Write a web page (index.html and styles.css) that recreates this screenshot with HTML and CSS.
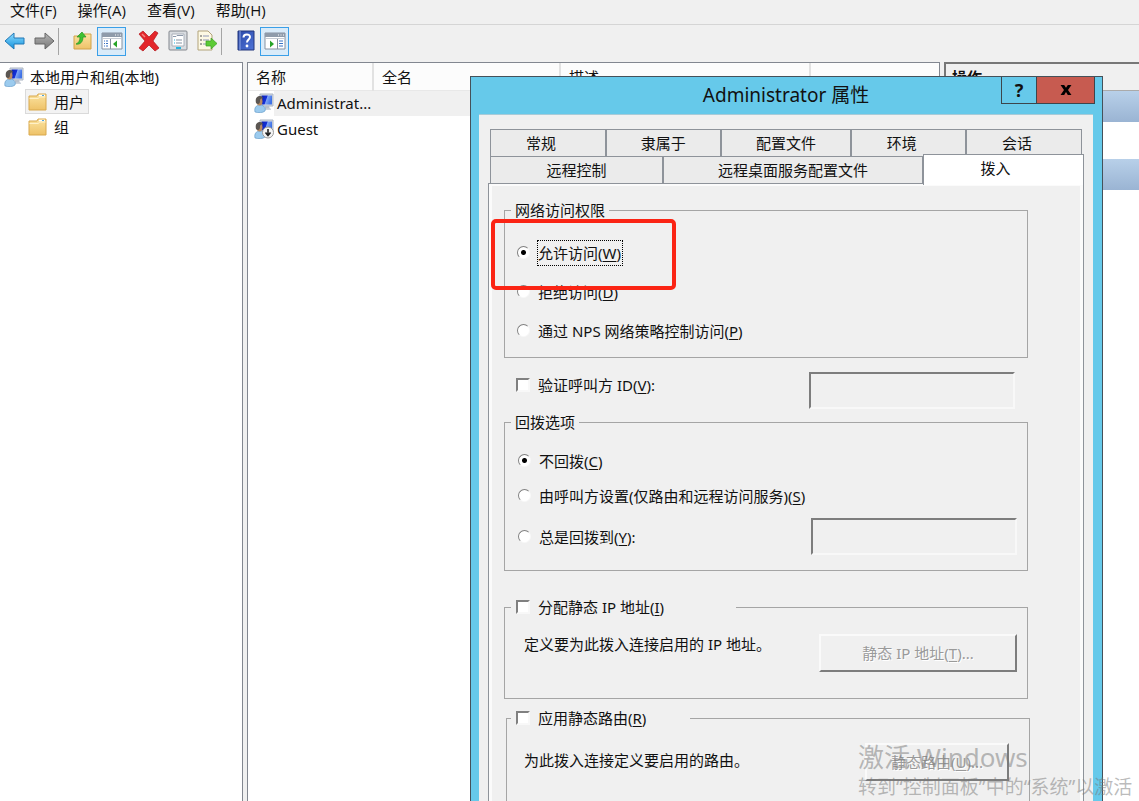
FILE: index.html
```html
<!DOCTYPE html>
<html lang="zh-CN">
<head>
<meta charset="utf-8">
<title>本地用户和组</title>
<link rel="stylesheet" href="styles.css">
</head>
<body>
<svg class="defs" width="0" height="0" aria-hidden="true">
  <defs>
    <linearGradient id="gBlue" x1="0" y1="0" x2="1" y2=".3"><stop offset="0" stop-color="#0a1fb0"/><stop offset=".5" stop-color="#1430d8"/><stop offset=".58" stop-color="#7fa4f6"/><stop offset="1" stop-color="#3f72e6"/></linearGradient>
    <linearGradient id="gFold" x1="0" y1="0" x2="0" y2="1"><stop offset="0" stop-color="#fbe3a0"/><stop offset="1" stop-color="#eec268"/></linearGradient>
    <linearGradient id="gArrow" x1="0" y1="0" x2="0" y2="1"><stop offset="0" stop-color="#8fdcff"/><stop offset="1" stop-color="#1292dc"/></linearGradient>
    <linearGradient id="gGray" x1="0" y1="0" x2="0" y2="1"><stop offset="0" stop-color="#b5b5b5"/><stop offset="1" stop-color="#777"/></linearGradient>
    <linearGradient id="gHelp" x1="0" y1="0" x2="1" y2="1"><stop offset="0" stop-color="#2a48a8"/><stop offset="1" stop-color="#4f74d8"/></linearGradient>
    <symbol id="user" viewBox="0 0 20 20">
      <path d="M6 1h13v12H6z" fill="#d5dbe4" stroke="#aab4c2"/>
      <path d="M7.500 2.500h10.500v9H7.500z" fill="url(#gBlue)"/>
      <path d="M11 13h4l1 3h-5z" fill="#b8c0cc"/><path d="M9 15.500h8v1.500H9z" fill="#ccd3dc"/>
      <path d="M1 19c-1-4 1-7 5-7s6 3 5 6c-2 2-7 2-10 1z" fill="#9ccbee" stroke="#5a93c4" stroke-width=".6"/>
      <ellipse cx="5.500" cy="8.500" rx="3" ry="4" fill="#b98a62"/>
      <path d="M2 10c-1-5 1-7 4-7 2 0 3 1 3 3-2-1-3 0-3 2 0 3-2 4-4 2z" fill="#5b5652"/>
    </symbol>
    <symbol id="folder" viewBox="0 0 20 18">
      <path d="M1 3h8l1-2h8v16H1z" fill="url(#gFold)" stroke="#d9a94f"/>
      <path d="M11 2.500h6" stroke="#fff" stroke-width="1.500"/><path d="M14 2.500h2" stroke="#4fa6e0"/>
      <path d="M1.500 5.500h9l1-1.500h6" fill="none" stroke="#fff1c8"/>
    </symbol>
    <symbol id="panel" viewBox="0 0 22 20">
      <path d="M1 2h20v16H1z" fill="#fff" stroke="#8691a0"/>
      <path d="M1 2h20v4H1z" fill="#8f9baa"/><path d="M14 4h1M16.500 4h1M19 4h1" stroke="#fff"/>
      <path d="M2 7.500h18" stroke="#c6ccd4"/>
    </symbol>
  </defs>
</svg>
<div class="app">
  <nav class="menubar">
    <button>文件(F)</button><button>操作(A)</button><button>查看(V)</button><button>帮助(H)</button>
  </nav>
  <div class="toolbar">
    <button class="tool" aria-label="后退"><svg width="22" height="20" viewBox="0 0 22 20"><path d="M1 10l9-8v5h10v6H10v5z" fill="url(#gArrow)" stroke="#2379b6"/></svg></button>
    <button class="tool" aria-label="前进"><svg width="22" height="20" viewBox="0 0 22 20"><path d="M21 10l-9-8v5H2v6h10v5z" fill="url(#gGray)" stroke="#666"/></svg></button>
    <span class="sep"></span>
    <button class="tool" aria-label="上移"><svg width="22" height="22" viewBox="0 0 22 22"><path d="M2 6h9l1-2h7v15H2z" fill="url(#gFold)" stroke="#d2a24b"/><path d="M4 14c3-1 4-4 4-7H5l5-5 4 5h-3c0 5-3 8-7 7z" fill="#3fc132" stroke="#259322" stroke-width=".7"/></svg></button>
    <button class="tool pressed" aria-label="显示/隐藏控制台树"><svg width="22" height="20" viewBox="0 0 22 20"><use href="#panel"/><path d="M9.500 8v10" stroke="#8691a0"/><path d="M3 10h4M3 12.500h4M3 15h4" stroke="#3973c4" stroke-dasharray="1 1 4"/><path d="M16 9.500v7l-4-3.500z" fill="#28a428"/></svg></button>
    <span class="space"></span>
    <button class="tool" aria-label="删除"><svg width="22" height="22" viewBox="0 0 22 22"><path d="M1 4l4-3 6 6 6-6 3 2-5 8 6 7-4 3-6-6-6 6-4-3 6-7z" fill="#e3262b" stroke="#b3161b" stroke-width=".7"/><path d="M4 4l3 3" stroke="#f48380" stroke-width="1.500"/></svg></button>
    <button class="tool" aria-label="属性"><svg width="20" height="22" viewBox="0 0 20 22"><rect x="1" y="1" width="18" height="19" rx="1" fill="#d9dce0" stroke="#83878e"/><path d="M4 4h12v12H4z" fill="#fff" stroke="#a9b0ba"/><path d="M5 6.500h3l1-1h6" stroke="#8b98aa" fill="none"/><path d="M6 10h1M6 13h1" stroke="#25b4dd"/><path d="M8 10h6M8 13h6" stroke="#8793a3"/><path d="M8 18h5" stroke="#25b4dd" stroke-width="2"/></svg></button>
    <button class="tool" aria-label="导出列表"><svg width="22" height="22" viewBox="0 0 22 22"><path d="M2 1h10l4 4v15H2z" fill="#fdf9e4" stroke="#b2a37b"/><path d="M4 6h2M4 10h2M4 14h2" stroke="#555"/><path d="M7 6h6M7 10h6M7 14h4" stroke="#8f97b8"/><path d="M10 11h5V8l6 5.500-6 5.500v-3h-5z" fill="#5ccb35" stroke="#3a9e23" stroke-width=".7"/></svg></button>
    <span class="sep"></span>
    <button class="tool" aria-label="帮助"><svg width="20" height="22" viewBox="0 0 20 22"><path d="M2 1h16v19H2z" fill="url(#gHelp)" stroke="#22367c"/><path d="M4 1v19" stroke="#8ea5e4"/><path d="M7.500 7.500c0-4 6.500-4 6.500-.5 0 2.500-3 2.500-3 5.500" fill="none" stroke="#fff" stroke-width="2"/><circle cx="11" cy="16" r="1.400" fill="#fff"/></svg></button>
    <button class="tool pressed" aria-label="显示/隐藏操作窗格"><svg width="22" height="20" viewBox="0 0 22 20"><use href="#panel"/><path d="M13.500 8v10" stroke="#8691a0"/><path d="M15 10h4M15 12.500h4M15 15h4" stroke="#3973c4"/><path d="M6 9.500v7l4-3.500z" fill="#28a428"/></svg></button>
  </div>
  <main class="panes">
    <section class="pane tree">
      <div class="node"><svg width="20" height="20"><use href="#user"/></svg><span>本地用户和组(本地)</span></div>
      <div class="node child selected"><svg width="20" height="18"><use href="#folder"/></svg><span>用户</span></div>
      <div class="node child"><svg width="20" height="18"><use href="#folder"/></svg><span>组</span></div>
    </section>
    <section class="pane list">
      <table class="users">
        <thead><tr><th class="c1">名称</th><th class="c2">全名</th><th class="c3">描述</th><th></th></tr></thead>
        <tbody>
          <tr class="current"><td><div class="cell"><svg width="20" height="20"><use href="#user"/></svg>Administrat...</div></td><td></td><td></td><td></td></tr>
          <tr><td><div class="cell"><svg width="20" height="20" viewBox="0 0 20 20"><use href="#user"/><circle cx="14" cy="13.500" r="5.500" fill="#f4f4f4" stroke="#999"/><path d="M14 10v6M11.500 13.500L14 16.500l2.500-3" fill="none" stroke="#222" stroke-width="1.600"/></svg>Guest</div></td><td></td><td></td><td></td></tr>
        </tbody>
      </table>
    </section>
    <aside class="pane actions">
      <h2>操作</h2>
      <div class="band"></div><div class="blank"></div><div class="band"></div>
    </aside>
  </main>
</div>

<div class="dialog" role="dialog" aria-labelledby="dlg-title">
  <header class="titlebar">
    <h1 id="dlg-title">Administrator 属性</h1>
    <div class="caption"><button class="help">?</button><button class="close" aria-label="关闭"><svg width="12" height="10" viewBox="0 0 12 11"><path d="M0 0h4l2 3 2-3h4L8.200 5.500 12 11H8L6 7.800 4 11H0l3.800-5.500z" fill="#000"/></svg></button></div>
  </header>
  <div class="client">
    <div class="tabs" role="tablist">
      <div class="tabrow upper"><button role="tab" class="lead">常规</button><button role="tab">隶属于</button><button role="tab">配置文件</button><button role="tab" class="lead">环境</button><button role="tab" class="lead">会话</button></div>
      <div class="tabrow lower"><button role="tab">远程控制</button><button role="tab">远程桌面服务配置文件</button><button role="tab" class="active" aria-selected="true">拨入</button></div>
    </div>
    <form class="page">
      <fieldset class="access">
        <legend>网络访问权限</legend>
        <label class="opt"><input type="radio" name="access" checked><span class="focus">允许访问(<u>W</u>)</span></label>
        <label class="opt"><input type="radio" name="access"><span>拒绝访问(<u>D</u>)</span></label>
        <label class="opt"><input type="radio" name="access"><span>通过 NPS 网络策略控制访问(<u>P</u>)</span></label>
        <div class="highlight"></div>
      </fieldset>
      <div class="verify">
        <label class="opt"><input type="checkbox"><span>验证呼叫方 ID(<u>V</u>):</span></label>
        <input type="text" class="field" aria-label="呼叫方 ID" disabled>
      </div>
      <fieldset class="callback">
        <legend>回拨选项</legend>
        <label class="opt"><input type="radio" name="cb" checked><span>不回拨(<u>C</u>)</span></label>
        <label class="opt"><input type="radio" name="cb"><span>由呼叫方设置(仅路由和远程访问服务)(<u>S</u>)</span></label>
        <div class="always">
          <label class="opt"><input type="radio" name="cb"><span>总是回拨到(<u>Y</u>):</span></label>
          <input type="text" class="field" aria-label="回拨号码" disabled>
        </div>
      </fieldset>
      <fieldset class="static ip">
        <legend><label class="opt"><input type="checkbox"><span>分配静态 IP 地址(<u>I</u>)</span></label></legend>
        <div class="line"><p>定义要为此拨入连接启用的 IP 地址。</p><button type="button" disabled>静态 IP 地址(<u>T</u>)...</button></div>
      </fieldset>
      <fieldset class="static route">
        <legend><label class="opt"><input type="checkbox"><span>应用静态路由(<u>R</u>)</span></label></legend>
        <div class="line"><p>为此拨入连接定义要启用的路由。</p><button type="button" disabled>静态路由(<u>U</u>)...</button></div>
      </fieldset>
    </form>
  </div>
</div>

<div class="watermark"><strong>激活 Windows</strong><span>转到“控制面板”中的“系统”以激活</span></div>
</body>
</html>
```

FILE: styles.css
```css
* { box-sizing: border-box; }
body {
  margin: 0;
  height: 100vh;
  overflow: hidden;
  position: relative;
  background: #f0f0f0;
  color: #111;
  font: 15px/20px "Noto Sans", "Noto Sans CJK SC", sans-serif;
}
button, input { font: inherit; color: inherit; margin: 0; }
button { background: none; border: 0; padding: 0; }
h1, h2, p { margin: 0; font-weight: 400; }
svg { display: block; flex: none; }
u { text-underline-offset: 2px; }
.defs { position: absolute; }

/* console window */
.app { height: 100%; display: flex; flex-direction: column; }
.menubar { display: flex; gap: 21px; padding: 0 10px 4px; border-bottom: 1px solid #d5d5d5; }
.menubar button { font-family: "Open Sans", "Noto Sans CJK SC", sans-serif; white-space: nowrap; }
.toolbar { display: flex; align-items: center; height: 32px; }
.tool { width: 29px; height: 29px; display: flex; align-items: center; justify-content: center; }
.tool.pressed { background: #d9ebf9; border: 1px solid #3a9fe8; }
.sep { width: 1px; height: 27px; background: #a5a5a5; margin: 0 9px 0 0; }
.space { width: 8px; }
.panes { flex: 1; display: grid; grid-template-columns: 243px 1fr 195px; column-gap: 4px; padding-top: 5px; min-height: 0; }
.pane { background: #fff; border: 1px solid #828790; border-bottom: 0; overflow: hidden; }
.tree { border-left: 0; padding: 1px 0 0 4px; }
.node { display: flex; align-items: center; gap: 6px; height: 25px; }
.child { width: 64px; margin-left: 21px; padding-left: 2px; border: 1px solid transparent; }
.child.selected { background: #f3f3f3; border-color: #dadada; }

.users { width: 100%; border-collapse: collapse; table-layout: fixed; }
.users th { height: 27px; padding: 2px 0 0 8px; font-weight: 400; text-align: left; background: #fcfcfc; border-right: 2px solid #e2e2e2; border-bottom: 1px solid #e8e8e8; }
.users th:last-child { border-right: 0; }
.c1 { width: 125px; }
.c2 { width: 187px; }
.c3 { width: 250px; }
.users td { height: 26px; padding: 0; }
.current td { background: #f0f0f0; }
.current td:first-child { background: linear-gradient(90deg, #fff 26px, #f0f0f0 26px); }
.cell { display: flex; align-items: center; gap: 3px; padding-left: 6px; white-space: nowrap; }

.actions { border: 2px solid #777; border-right: 0; border-bottom: 0; }
.actions h2 { height: 27px; padding: 3px 0 0 6px; font-size: 15px; font-weight: 700; background: #f0f0f0; border-bottom: 1px solid #aaa; }
.band { height: 31px; background: linear-gradient(#b8d0e9, #9ab4d3); }
.blank { height: 37px; }

/* properties dialog */
.dialog { position: absolute; left: 470px; top: 76px; bottom: 0; width: 633px; overflow: hidden; background: #66c9ea; border: 1px solid #45515a; border-bottom: 0; padding: 0 9px 0 8px; }
.titlebar { height: 37px; position: relative; }
.titlebar h1 { font-size: 19px; line-height: 36px; text-align: center; }
.caption { position: absolute; right: -2px; top: 0; display: flex; }
.caption button { height: 27px; border: 1px solid #3c454b; border-top: 0; display: flex; align-items: center; justify-content: center; }
.help { width: 36px; font-size: 18px; font-weight: 700; }
.caption .close { width: 58px; border-left: 0; background: #c75b50; }
.client { background: #f0f0f0; border-top: 1px solid #a8cbd8; padding: 14px 9px 0; }
.tabs { padding: 0 2px; }
.tabrow { display: grid; }
.tabrow button { background: #ebebeb; border-right: 2px solid #8e939a; padding-bottom: 1px; }
.upper { grid-template-columns: 116fr 115fr 131fr 115fr 114fr; border: 1px solid #8e939a; border-bottom: 0; }
.upper button { height: 26px; }
.upper .lead { padding-right: 14px; }
.upper button:last-child { border-right: 0; }
.lower { grid-template-columns: 173fr 260fr 158fr; border-left: 1px solid #8e939a; }
.lower button { height: 27px; border-top: 1px solid #8e939a; }
.lower button.active { position: relative; background: #fff; height: 31px; margin: -2px -2px -2px -1px; border: 1px solid #8e939a; border-bottom: 0; padding: 0 16px 4px 0; }
.page { border: 1px solid #8e939a; border-bottom: 0; box-shadow: inset 3px 2px 0 #fbfbfb, inset -3px 0 0 #fbfbfb; padding: 16px 55px 0 15px; }

fieldset { position: relative; min-width: 0; margin: 0; border: 1px solid #a5a5a5; padding: 0 10px 0 6px; }
legend { height: 20px; padding: 0 4px; }
.opt { display: flex; align-items: center; gap: 8px; white-space: nowrap; }
.opt input { appearance: none; width: 14px; height: 14px; flex: none; background: #fff; border: 2px solid; border-color: #808080 #f8f8f8 #f8f8f8 #808080; }
.opt input[type="radio"] { width: 13px; height: 13px; border-width: 1px; border-radius: 50%; }
.opt input[type="radio"]:checked { background: radial-gradient(circle, #000 0 2px, #fff 3px); }
.access { padding-top: 13px; padding-bottom: 7px; }
.access .opt { height: 39px; padding-left: 6px; }
.focus { outline: 1px dotted #000; padding: 2px 1px 2px 0; }
.highlight { position: absolute; left: -14px; top: -1px; width: 185px; height: 71px; border: 4px solid #fb2414; border-radius: 5px; }
.verify { display: flex; justify-content: space-between; margin-top: 14px; padding: 0 13px 0 12px; }
.verify .opt { height: 26px; }
.field { width: 206px; height: 37px; background: #f0f0f0; border: 2px solid; border-color: #7d7d7d #f8f8f8 #f8f8f8 #7d7d7d; }
.callback { margin-top: 3px; padding: 11px 10px 15px 6px; }
.callback .opt { height: 35px; padding-left: 7px; }
.always { display: flex; align-items: center; justify-content: space-between; margin-top: 5px; }
.static legend { padding: 0 0 0 5px; }
.static .line { display: flex; justify-content: space-between; align-items: flex-start; padding-left: 13px; }
.static button { height: 38px; color: #9a9a9a; text-shadow: 1px 1px 0 #fff; border: 2px solid; border-color: #fafafa #7d7d7d #7d7d7d #fafafa; }
.ip { margin-top: 26px; padding-top: 17px; padding-bottom: 26px; }
.ip legend { width: 225px; }
.ip button { width: 198px; }
.route { margin: 9px -2px 0 2px; padding: 15px 20px 40px 4px; }
.route legend { width: 179px; }
.route .line p { padding-top: 7px; }
.route button { width: 144px; }

.watermark { position: absolute; left: 858px; top: 741px; display: flex; flex-direction: column; color: rgba(120, 120, 120, .5); white-space: nowrap; pointer-events: none; }
.watermark strong { font-size: 26px; line-height: 32px; font-weight: 400; }
.watermark span { font-size: 19px; line-height: 28px; }
```
